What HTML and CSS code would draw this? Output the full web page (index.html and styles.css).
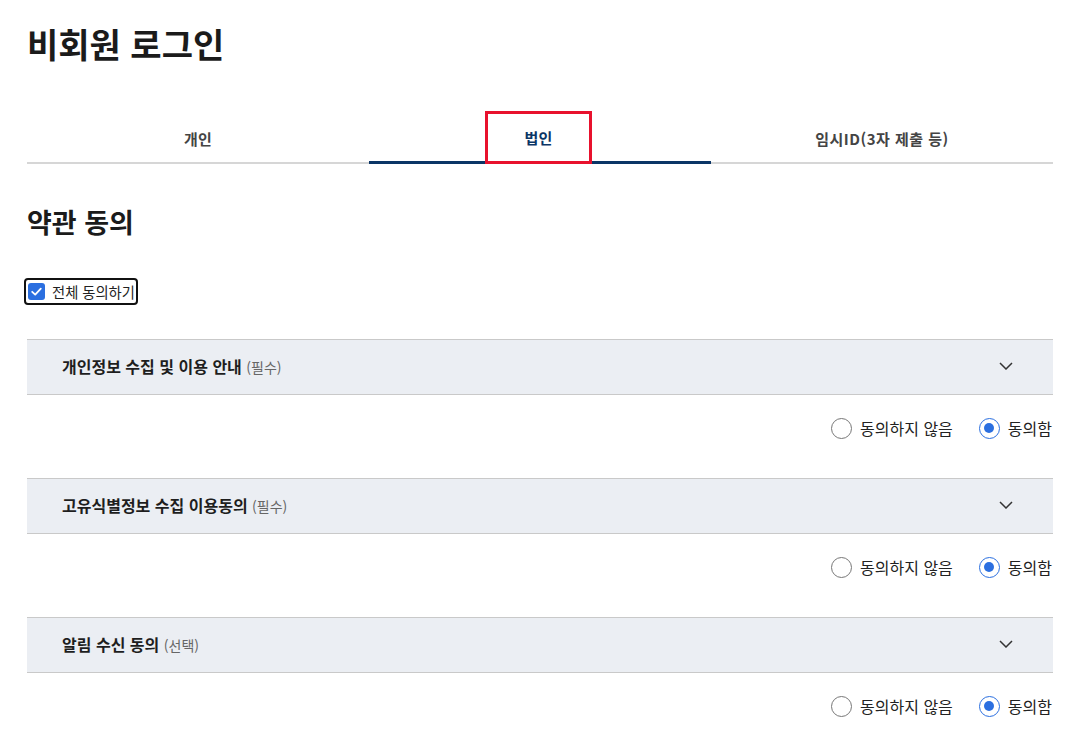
FILE: index.html
```html
<!DOCTYPE html>
<html lang="ko">
<head>
<meta charset="utf-8">
<title>비회원 로그인</title>
<link rel="stylesheet" href="styles.css">
</head>
<body>
<main class="page">
  <h1 class="title">비회원 로그인</h1>
  <ul class="tabs">
    <li class="tab"><button class="tab-btn">개인</button></li>
    <li class="tab active"><button class="tab-btn focused">법인</button></li>
    <li class="tab"><button class="tab-btn">임시ID(3자 제출 등)</button></li>
  </ul>

  <h2 class="section-title">약관 동의</h2>

  <label class="check-all">
    <span class="checkbox"><svg width="17" height="17" viewBox="0 0 17 17"><path d="M4.2 8.8 L7.2 11.6 L12.8 5.6" fill="none" stroke="#fff" stroke-width="1.8" stroke-linecap="round" stroke-linejoin="round"/></svg></span>
    <span class="check-text">전체 동의하기</span>
  </label>

  <div class="terms">
    <section class="term">
      <div class="term-head">
        <span class="term-title">개인정보 수집 및 이용 안내 <span class="tag">(필수)</span></span>
        <svg class="chev" width="14" height="8" viewBox="0 0 14 8"><path d="M1 1 L7 7 L13 1" fill="none" stroke="#333" stroke-width="1.5"/></svg>
      </div>
      <div class="term-choice">
        <label class="radio"><span class="dot"></span>동의하지 않음</label>
        <label class="radio on"><span class="dot"></span>동의함</label>
      </div>
    </section>
    <section class="term">
      <div class="term-head">
        <span class="term-title">고유식별정보 수집 이용동의 <span class="tag">(필수)</span></span>
        <svg class="chev" width="14" height="8" viewBox="0 0 14 8"><path d="M1 1 L7 7 L13 1" fill="none" stroke="#333" stroke-width="1.5"/></svg>
      </div>
      <div class="term-choice">
        <label class="radio"><span class="dot"></span>동의하지 않음</label>
        <label class="radio on"><span class="dot"></span>동의함</label>
      </div>
    </section>
    <section class="term">
      <div class="term-head">
        <span class="term-title">알림 수신 동의 <span class="tag">(선택)</span></span>
        <svg class="chev" width="14" height="8" viewBox="0 0 14 8"><path d="M1 1 L7 7 L13 1" fill="none" stroke="#333" stroke-width="1.5"/></svg>
      </div>
      <div class="term-choice">
        <label class="radio"><span class="dot"></span>동의하지 않음</label>
        <label class="radio on"><span class="dot"></span>동의함</label>
      </div>
    </section>
  </div>
</main>
</body>
</html>
```

FILE: styles.css
```css
* { box-sizing: border-box; }
html, body { margin: 0; padding: 0; background: #fff; }
body {
  font-family: "Noto Sans CJK KR", "Noto Sans", sans-serif;
  color: #1e1e1e;
}
.page {
  padding: 19px 17px 0 27px;
}
.title {
  margin: 0;
  font-size: 34px;
  line-height: 49px;
  font-weight: 700;
  color: #1b1b1b;
}
.tabs {
  list-style: none;
  margin: 43px 0 0;
  padding: 0;
  display: flex;
}
.tab {
  flex: 1;
  display: flex;
  justify-content: center;
  padding-top: 3px;
  border-bottom: 2px solid #d6d6d6;
}
.tab.active {
  border-bottom: 3px solid #0b3566;
}
.tab-btn {
  border: 0;
  background: transparent;
  font-family: inherit;
  font-size: 15px;
  font-weight: 700;
  color: #444;
  height: 48px;
  padding: 0 35px;
  letter-spacing: 0.1px;
}
.tab:last-child .tab-btn { letter-spacing: 0.5px; }
.tab.active .tab-btn { color: #0b3566; height: 47px; }
.tab-btn.focused {
  outline: 3px solid #e8112d;
  outline-offset: 0;
  padding: 0 37px;
  margin-right: 3px;
}
.section-title {
  margin: 40px 0 0;
  font-size: 27px;
  line-height: 36px;
  font-weight: 700;
  color: #1b1b1b;
}
.check-all {
  margin-top: 38px;
  display: inline-flex;
  align-items: center;
  gap: 7px;
  border: 2px solid #111;
  border-radius: 4px;
  padding: 2px 1px 2px 2px;
  margin-left: -3px;
  height: 27px;
}
.checkbox {
  width: 17px;
  height: 17px;
  border-radius: 3px;
  background: #2b6fe0;
  display: flex;
}
.check-text {
  font-size: 14.3px;
  line-height: 19px;
  color: #222;
}
.terms {
  margin-top: 34px;
}
.term-head {
  height: 56px;
  background: #ebeef3;
  border-top: 1px solid #c9c9c9;
  border-bottom: 1px solid #c9c9c9;
  display: flex;
  align-items: center;
  justify-content: space-between;
  padding: 0 40px 2px 35px;
}
.term-title {
  font-size: 16px;
  font-weight: 700;
  color: #1e1e1e;
}
.tag {
  font-size: 14px;
  font-weight: 400;
  color: #666;
}
.chev { display: block; }
.term-choice {
  display: flex;
  justify-content: flex-end;
  gap: 26px;
  padding: 22px 1px 39px 0;
}
.radio {
  display: flex;
  align-items: center;
  gap: 8px;
  font-size: 16px;
  line-height: 22px;
  color: #222;
}
.dot {
  width: 21px;
  height: 21px;
  border-radius: 50%;
  border: 1px solid #777;
  background: #fff;
  display: flex;
  align-items: center;
  justify-content: center;
}
.radio.on .dot {
  border: 1.5px solid #2b6fe0;
}
.radio.on .dot::after {
  content: "";
  width: 10px;
  height: 10px;
  border-radius: 50%;
  background: #2b6fe0;
}
```
